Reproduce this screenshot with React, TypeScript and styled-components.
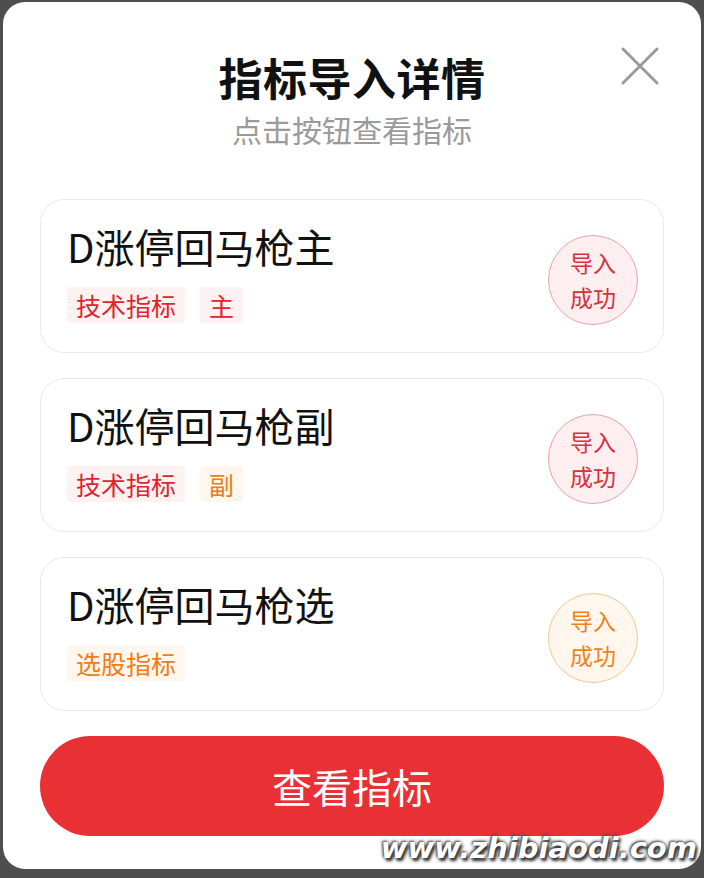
import React from "react";
import styled, { createGlobalStyle } from "styled-components";

const GlobalStyle = createGlobalStyle`
  html, body {
    margin: 0;
    padding: 0;
    background: #4e4e4e;
    font-family: "Noto Sans CJK SC", "Noto Sans", sans-serif;
  }
  * { box-sizing: border-box; }
`;

const Page = styled.div`
  width: 704px;
  height: 878px;
  padding: 2px 3px 9px 3px;
  position: relative;
  overflow: hidden;
`;

const Modal = styled.div`
  position: relative;
  width: 698px;
  height: 867px;
  background: #ffffff;
  border-radius: 22px;
  padding: 46px 37px 0 37px;
  display: flex;
  flex-direction: column;
`;

const Header = styled.div`
  display: flex;
  flex-direction: column;
  align-items: center;
`;

const Title = styled.h1`
  margin: 0;
  font-size: 44px;
  line-height: 58px;
  font-weight: 700;
  color: #111;
  letter-spacing: 0.5px;
`;

const Subtitle = styled.div`
  margin-top: 3px;
  font-size: 30px;
  line-height: 40px;
  color: #9a9a9a;
`;

const CloseButton = styled.button`
  position: absolute;
  top: 44px;
  right: 41px;
  width: 40px;
  height: 40px;
  padding: 0;
  border: none;
  background: transparent;
  cursor: pointer;
`;

const List = styled.div`
  margin-top: 50px;
  display: flex;
  flex-direction: column;
  gap: 25px;
`;

const Card = styled.div`
  height: 154px;
  border: 1.5px solid #e9e9e9;
  border-radius: 24px;
  padding: 21px 25px 0 26px;
  display: flex;
  align-items: center;
  justify-content: space-between;
`;

const Info = styled.div`
  display: flex;
  flex-direction: column;
  align-self: flex-start;
`;

const CardTitle = styled.div`
  font-size: 40px;
  line-height: 50px;
  color: #111;
`;

const Tags = styled.div`
  margin-top: 16px;
  display: flex;
  gap: 15px;
`;

const Tag = styled.span<{ $tone: "red" | "orange" }>`
  height: 36px;
  padding: 0 9px;
  display: inline-flex;
  align-items: center;
  font-size: 25px;
  border-radius: 4px;
  color: ${(p) => (p.$tone === "red" ? "#e0242c" : "#f07c12")};
  background: ${(p) => (p.$tone === "red" ? "#fdf2f2" : "#fff6ee")};
`;

const Status = styled.div<{ $tone: "red" | "orange" }>`
  width: 90px;
  height: 90px;
  border-radius: 50%;
  margin-top: -13px;
  display: flex;
  flex-direction: column;
  align-items: center;
  justify-content: center;
  font-size: 23px;
  line-height: 35px;
  color: ${(p) => (p.$tone === "red" ? "#d8303c" : "#ee8418")};
  background: ${(p) => (p.$tone === "red" ? "#fdeef0" : "#fff7ee")};
  border: 1px solid ${(p) => (p.$tone === "red" ? "#e8a2ac" : "#f3c890")};
`;

const MainButton = styled.button`
  margin-top: 25px;
  height: 100px;
  border: none;
  border-radius: 50px;
  background: #e83035;
  color: #fff;
  font-family: "Noto Sans CJK SC", "Noto Sans", sans-serif;
  font-size: 40px;
  cursor: pointer;
`;

const Watermark = styled.div`
  position: absolute;
  right: 7px;
  bottom: 13px;
  font-family: "DejaVu Sans", sans-serif;
  font-style: italic;
  font-weight: 700;
  font-size: 29px;
  letter-spacing: 0px;
  color: #ffffff;
  text-shadow: 2px 3px 3px #333, -1px -1px 2px #555, 0 0 4px #444;
`;

type Tone = "red" | "orange";

const items: { name: string; tags: { label: string; tone: Tone }[]; tone: Tone }[] = [
  { name: "D涨停回马枪主", tags: [{ label: "技术指标", tone: "red" }, { label: "主", tone: "red" }], tone: "red" },
  { name: "D涨停回马枪副", tags: [{ label: "技术指标", tone: "red" }, { label: "副", tone: "orange" }], tone: "red" },
  { name: "D涨停回马枪选", tags: [{ label: "选股指标", tone: "orange" }], tone: "orange" },
];

export default function App() {
  return (
    <>
      <GlobalStyle />
      <Page>
        <Modal>
          <Header>
            <Title>指标导入详情</Title>
            <Subtitle>点击按钮查看指标</Subtitle>
          </Header>
          <CloseButton aria-label="关闭">
            <svg width="40" height="40" viewBox="0 0 40 40">
              <path d="M3 3 L37 37 M37 3 L3 37" stroke="#9b9b9b" strokeWidth="3" strokeLinecap="round" />
            </svg>
          </CloseButton>
          <List>
            {items.map((it) => (
              <Card key={it.name}>
                <Info>
                  <CardTitle>{it.name}</CardTitle>
                  <Tags>
                    {it.tags.map((t) => (
                      <Tag key={t.label} $tone={t.tone}>{t.label}</Tag>
                    ))}
                  </Tags>
                </Info>
                <Status $tone={it.tone}>
                  <span>导入</span>
                  <span>成功</span>
                </Status>
              </Card>
            ))}
          </List>
          <MainButton>查看指标</MainButton>
        </Modal>
        <Watermark>www.zhibiaodi.com</Watermark>
      </Page>
    </>
  );
}
